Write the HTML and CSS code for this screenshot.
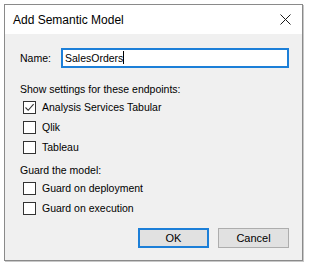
FILE: index.html
```html
<!DOCTYPE html>
<html lang="en">
<head>
  <meta charset="UTF-8" />
  <title>Add Semantic Model</title>
  <link rel="stylesheet" href="styles.css">
</head>
<body>
  <div class="dialog">
    <div class="titlebar">
      <span class="title">Add Semantic Model</span>
      <svg class="close" width="11" height="11" viewBox="0 0 11 11">
        <path d="M0.5 0.5 L10.5 10.5 M10.5 0.5 L0.5 10.5" stroke="#1a1a1a" stroke-width="1" fill="none" />
      </svg>
    </div>

    <div class="content">
      <div class="name-row">
        <label for="modelName">Name:</label>
        <div class="textbox" id="modelName">SalesOrders<span class="caret"></span></div>
      </div>

      <div class="group-label">Show settings for these endpoints:</div>
      <div class="check-list">
        <div class="check"><span class="box checked">
          <svg width="11" height="11" viewBox="0 0 11 11"><path d="M1.5 5.5 L4.2 8.3 L9.6 2.2" stroke="#333" stroke-width="1.1" fill="none" /></svg>
        </span>Analysis Services Tabular</div>
        <div class="check"><span class="box"></span>Qlik</div>
        <div class="check"><span class="box"></span>Tableau</div>
      </div>

      <div class="group-label second">Guard the model:</div>
      <div class="check-list">
        <div class="check"><span class="box"></span>Guard on deployment</div>
        <div class="check"><span class="box"></span>Guard on execution</div>
      </div>

      <div class="buttons">
        <button class="btn default">OK</button>
        <button class="btn">Cancel</button>
      </div>
    </div>
  </div>
</body>
</html>
```

FILE: styles.css
```css
body {
  margin: 0;
  padding: 4px;
  background: #fff;
  font-family: 'Liberation Sans', Arial, sans-serif;
  color: #000;
}

.dialog {
  width: 297px;
  height: 255px;
  border: 1px solid #8a8a8a;
  box-shadow: 1px 1px 0 #c8c8c8;
  background: #f0f0f0;
  display: flex;
  flex-direction: column;
}

.titlebar {
  height: 29px;
  background: #fff;
  display: flex;
  align-items: center;
  justify-content: space-between;
  padding: 0 11px 0 8px;
}

.title {
  font-size: 12px;
}

.content {
  padding: 14px 13px 0 15px;
  font-size: 10.5px;
  display: flex;
  flex-direction: column;
}

.name-row {
  display: flex;
  align-items: center;
}

.name-row label {
  width: 41px;
}

.textbox {
  flex: 1;
  height: 16px;
  line-height: 16px;
  border: 1px solid #1c7fd8;
  outline: 1px solid #1c7fd8;
  outline-offset: -2px;
  background: #fff;
  padding: 1px 3px;
}

.caret {
  display: inline-block;
  width: 1px;
  height: 13px;
  background: #000;
  vertical-align: -2px;
}

.group-label {
  margin-top: 14px;
  line-height: 14px;
}

.group-label.second {
  margin-top: 6px;
}

.check-list {
  display: flex;
  flex-direction: column;
  padding-left: 3px;
  margin-top: 1px;
}

.check {
  display: flex;
  align-items: center;
  height: 20px;
  gap: 6px;
}

.box {
  width: 11px;
  height: 11px;
  border: 1px solid #333;
  background: #fff;
  display: flex;
  align-items: center;
  justify-content: center;
}

.buttons {
  display: flex;
  justify-content: flex-end;
  gap: 9px;
  margin-top: 10px;
}

.btn {
  width: 71px;
  height: 20px;
  font-family: inherit;
  font-size: 11px;
  background: #e1e1e1;
  border: 1px solid #adadad;
  padding: 0;
  color: #000;
}

.btn.default {
  border: 2px solid #1c7fd8;
}
```
